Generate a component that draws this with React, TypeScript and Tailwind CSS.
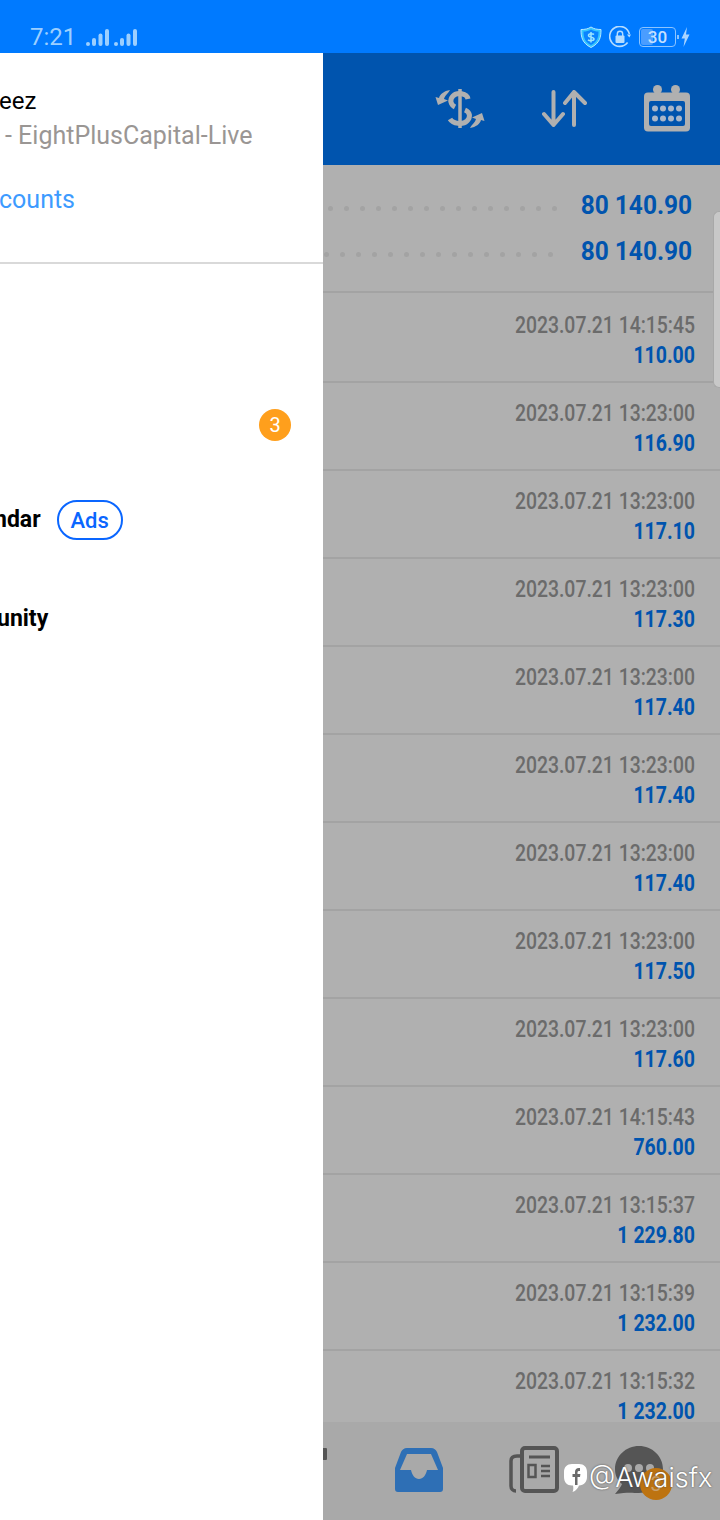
import React from 'react';

const rows = [
  { time: '2023.07.21 14:15:45', amount: '110.00' },
  { time: '2023.07.21 13:23:00', amount: '116.90' },
  { time: '2023.07.21 13:23:00', amount: '117.10' },
  { time: '2023.07.21 13:23:00', amount: '117.30' },
  { time: '2023.07.21 13:23:00', amount: '117.40' },
  { time: '2023.07.21 13:23:00', amount: '117.40' },
  { time: '2023.07.21 13:23:00', amount: '117.40' },
  { time: '2023.07.21 13:23:00', amount: '117.50' },
  { time: '2023.07.21 13:23:00', amount: '117.60' },
  { time: '2023.07.21 14:15:43', amount: '760.00' },
  { time: '2023.07.21 13:15:37', amount: '1 229.80' },
  { time: '2023.07.21 13:15:39', amount: '1 232.00' },
  { time: '2023.07.21 13:15:32', amount: '1 232.00' },
];

const Signal = () => (
  <svg width="23" height="17" viewBox="0 0 23 17" fill="#9ccfff">
    <rect x="0" y="13" width="4" height="4" rx="2" />
    <rect x="6" y="9" width="4" height="8" rx="2" />
    <rect x="12.5" y="4.5" width="4" height="12.5" rx="2" />
    <rect x="19" y="0" width="4" height="17" rx="2" />
  </svg>
);

const StatusBar = () => (
  <div className="h-[53px] bg-[#007aff] flex items-end pb-[2px] pl-[30px] pr-[30px]">
    <span className="text-[24px] leading-[28px] text-[#9ccfff]">7:21</span>
    <div className="flex items-end gap-[5px] ml-[10px] mb-[5px]">
      <Signal />
      <Signal />
    </div>
    <div className="ml-auto flex items-center gap-[7px] mb-[3px]">
      <svg width="22" height="22" viewBox="0 0 22 22">
        <path d="M11 1 C14 3 17 3.5 21 3.5 C21 11 20 17 11 21.5 C2 17 1 11 1 3.5 C5 3.5 8 3 11 1 Z" fill="#35c6ff" stroke="#b5e8ff" strokeWidth="1" />
        <path d="M11 3.5 C13.5 5 16 5.5 18.5 5.5 C18.5 11 17.5 15.5 11 19 C4.5 15.5 3.5 11 3.5 5.5 C6 5.5 8.5 5 11 3.5 Z" fill="#0a84ff" />
        <path d="M14 8.5 C13 7.5 8.5 7.2 8.5 9.5 C8.5 12 14 10.5 14 13 C14 15 9.5 15 8 13.8 M11 6 V16.5" fill="none" stroke="#9fe6ff" strokeWidth="1.5" />
      </svg>
      <svg width="22" height="22" viewBox="0 0 22 22">
        <path d="M18.6 16.5 A10 10 0 1 1 20.4 8" fill="none" stroke="#b5dcff" strokeWidth="1.6" />
        <path d="M18 8.5 L22 8.5 L20.3 11.5 Z" fill="#b5dcff" />
        <rect x="6.5" y="9.5" width="9" height="7.5" rx="1" fill="#b5dcff" />
        <path d="M8.3 10 V8 A2.7 2.7 0 0 1 13.7 8 V10" fill="none" stroke="#b5dcff" strokeWidth="1.4" />
      </svg>
      <div className="flex items-center gap-[1px] ml-[1px]">
        <div className="relative w-[37px] h-[20px] rounded-[4px] border border-[#8cc4ff] flex items-center justify-center overflow-hidden">
          <div className="absolute left-[1px] top-[1px] bottom-[1px] w-[12px] rounded-[2px] bg-[#4a9dff]" />
          <span className="relative text-[17px] leading-none font-medium text-[#c4e0ff]">30</span>
        </div>
        <div className="w-[2px] h-[4px] bg-[#8cc4ff]" />
        <svg width="9" height="20" viewBox="0 0 9 20" className="ml-[1px]">
          <path d="M6 0 L0.5 11.5 H3.8 L2.5 20 L8.5 7.5 H5 Z" fill="#a9d4ff" />
        </svg>
      </div>
    </div>
  </div>
);

const Drawer = () => (
  <div className="w-[323px] shrink-0 bg-white flex flex-col overflow-hidden whitespace-nowrap">
    <div className="h-[211px] border-b-2 border-[#d9d9d9] shrink-0">
      <div className="mt-[33px] -ml-[1px] text-[24px] leading-[30px] text-black">eez</div>
      <div className="mt-[5px] text-[25px] leading-[30px] text-[#9a9694] pl-[5px]">- EightPlusCapital-Live</div>
      <div className="mt-[34px] -ml-[1px] text-[25px] leading-[30px] text-[#3d9bff]">counts</div>
    </div>
    <div className="flex justify-end pr-[32px] mt-[145px]">
      <div className="w-[32px] h-[32px] rounded-full bg-[#ff9f1c] flex items-center justify-center text-white text-[20px]">3</div>
    </div>
    <div className="flex items-center mt-[59px]">
      <span className="-ml-[6px] text-[23px] leading-[30px] font-bold text-black">ndar</span>
      <span className="ml-[16px] w-[66px] h-[40px] rounded-full border-2 border-[#0a66ff] flex items-center justify-center text-[22px] font-medium text-[#0a66ff]">Ads</span>
    </div>
    <div className="mt-[64px] -ml-[3px] text-[23px] leading-[30px] font-bold text-black">unity</div>
  </div>
);

const HeaderBar = () => (
  <div className="h-[112px] bg-[#0054ae] shrink-0 relative">
    <div className="flex items-center h-full pl-[112px] pr-[30px] justify-between pb-[1px]">
      <svg width="52" height="44" viewBox="0 0 52 44" fill="#b0b0b0">
        <path d="M25 2 V41" stroke="#b0b0b0" strokeWidth="3.5" fill="none" />
        <path d="M33 12 C32 6 22 5 18 9 C14 13 16 18 20 20 M30 23 C35 25 36 30 32 34 C28 38 18 37 15 32" stroke="#b0b0b0" strokeWidth="5" fill="none" />
        <path d="M15 3 C13 7 10 8 9 12 L13 13.5 L3 18 L0.5 10 L4 11 C5 7 9 4 15 3 Z" />
        <path d="M35 41 C37 37 40 36 41 32 L37 30.5 L47 26 L49.5 34 L46 33 C45 37 41 40 35 41 Z" />
      </svg>
      <svg width="46" height="38" viewBox="0 0 46 38" fill="none" stroke="#b0b0b0" strokeWidth="4" strokeLinecap="round" strokeLinejoin="round" className="-translate-x-[1px]">
        <path d="M11.5 2 V35 M2 24 L11.5 35 L21 24" />
        <path d="M32 35 V2 M23 13 L32 2 L43 13" />
      </svg>
      <svg width="46" height="47" viewBox="0 0 46 47">
        <circle cx="13.5" cy="4.5" r="4.5" fill="#b0b0b0" />
        <circle cx="31.5" cy="4.5" r="4.5" fill="#b0b0b0" />
        <rect x="0" y="7.5" width="46" height="39" rx="4" fill="#b0b0b0" />
        <rect x="5" y="16" width="36" height="25" rx="2" fill="#0054ae" />
        {[11, 19, 27, 35].map((x) => (
          <React.Fragment key={x}>
            <circle cx={x} cy="23.5" r="3" fill="#a9b6c8" />
            <circle cx={x} cy="33.5" r="3" fill="#a9b6c8" />
          </React.Fragment>
        ))}
      </svg>
    </div>
  </div>
);

const Dots = ({ offset }: { offset: string }) => (
  <div className={`flex gap-[11px] ${offset}`}>
    {Array.from({ length: 15 }).map((_, i) => (
      <div key={i} className="w-[5px] h-[5px] rounded-full bg-[#a3a3a3]" />
    ))}
  </div>
);

const Summary = () => (
  <div className="h-[128px] shrink-0 border-b-2 border-[#a3a3a3] pt-[25px] pr-[28px]">
    <div className="flex items-center h-[30px]">
      <Dots offset="ml-[5px] mt-[6px]" />
      <span className="ml-auto text-[25.5px] leading-[30px] font-bold text-[#0054ae] scale-x-[0.96] origin-right">80 140.90</span>
    </div>
    <div className="flex items-center h-[30px] mt-[16px]">
      <Dots offset="ml-[1px] mt-[6px]" />
      <span className="ml-auto text-[25.5px] leading-[30px] font-bold text-[#0054ae] scale-x-[0.96] origin-right">80 140.90</span>
    </div>
  </div>
);

const Row = ({ time, amount, first }: { time: string; amount: string; first: boolean }) => (
  <div className={`shrink-0 border-b-2 border-[#a3a3a3] pr-[25px] text-right ${first ? 'h-[90px] pt-[18px]' : 'h-[88px] pt-[16px]'}`}>
    <div className="text-[23.5px] leading-[29px] font-medium text-[#6b6b6b] scale-x-[0.825] origin-right whitespace-nowrap">{time}</div>
    <div className="text-[23.5px] leading-[30px] font-bold text-[#0054ae] scale-x-[0.83] origin-right whitespace-nowrap">{amount}</div>
  </div>
);

const BottomNav = () => (
  <div className="h-[98px] shrink-0 bg-[#a9a9a9] relative">
    <div className="absolute left-0 top-[26px] w-[4px] h-[12px] bg-[#555555] rounded-r-[1px]" />
    <svg className="absolute left-[72px] top-[26px]" width="48" height="44" viewBox="0 0 48 44">
      <path fill="#2e6fb5" fillRule="evenodd" d="M12 0 H36 C39 0 41 2 42 4 L48 20 V41 C48 43 47 44 45 44 H3 C1 44 0 43 0 41 V20 L6 4 C7 2 9 0 12 0 Z M12 6 L5 22 H16 C17 27 20 31 24 31 C28 31 31 27 32 22 H43 L36 6 Z" />
    </svg>
    <svg className="absolute left-[186px] top-[24px]" width="50" height="47" viewBox="0 0 50 47">
      <path d="M12 10 H8 C5 10 2 11 2 15 V40 C2 43 4 45 7 45" fill="none" stroke="#555555" strokeWidth="3.5" />
      <rect x="13" y="2" width="35" height="43" rx="3" fill="none" stroke="#555555" strokeWidth="4" />
      <path d="M20 11 H41" stroke="#555555" strokeWidth="3" />
      <rect x="19.5" y="19" width="7" height="12" fill="none" stroke="#555555" strokeWidth="2.5" />
      <path d="M32 20 H41 M32 25 H41 M32 30 H41" stroke="#555555" strokeWidth="2.5" />
    </svg>
    <svg className="absolute left-[290px] top-[24px]" width="50" height="50" viewBox="0 0 50 50">
      <path d="M26 0 C39 0 50 10 50 23 C50 36 39 47 26 47 C20 47 15 46 2 48 C5 44 8 41 9 38 C4 34 2 29 2 23 C2 10 13 0 26 0 Z" fill="#555555" />
      <circle cx="15" cy="22" r="4" fill="#a9a9a9" />
      <circle cx="26" cy="22" r="4" fill="#a9a9a9" />
      <circle cx="37" cy="22" r="4" fill="#a9a9a9" />
    </svg>
    <div className="absolute left-[317px] top-[46px] w-[32px] h-[32px] rounded-full bg-[#bd7310] flex items-center justify-center text-[20px] text-[#c9a06a]">3</div>
    {/* watermark */}
    <div className="absolute left-[240px] top-[41px] flex items-center gap-[1px]">
      <svg width="25" height="30" viewBox="0 0 25 30">
        <path d="M9 1 H16 C21 1 24 4 24 9 V14 C24 19 21 22 16 22.5 C15 25 13 28 9.5 29 C10.5 27 10.5 24.5 10 22.5 H9 C4 22.5 1 19 1 14 V9 C1 4 4 1 9 1 Z" fill="#ffffff" />
        <path d="M17 5 C14 4.5 12 6 12 9 V11 H9.5 V14 H12 V22 H14.5 V14 H17 L17.4 11 H14.5 V9.5 C14.5 8.3 15.2 8 17 8 Z" fill="#6b6b6b" />
      </svg>
      <span className="text-[27px] leading-[30px] text-white font-light [font-family:Inter,sans-serif] [text-shadow:0_0_2px_#444]">@Awaisfx</span>
    </div>
  </div>
);

export default function App() {
  return (
    <div className="relative w-[720px] h-[1520px] flex flex-col overflow-hidden [font-family:Roboto,sans-serif]">
      <StatusBar />
      <div className="flex flex-1 min-h-0">
        <Drawer />
        <div className="flex-1 min-w-0 flex flex-col bg-[#b0b0b0]">
          <HeaderBar />
          <div className="flex-1 min-h-0 overflow-hidden flex flex-col">
            <Summary />
            {rows.map((r, i) => (
              <Row key={i} time={r.time} amount={r.amount} first={i === 0} />
            ))}
          </div>
          <BottomNav />
        </div>
      </div>
      {/* scroll handle */}
      <div className="absolute right-0 top-[211px] w-[7px] h-[177px] rounded-l-[6px] bg-[#c8c8c8] border border-[#a8a8a8] border-r-0" />
    </div>
  );
}
